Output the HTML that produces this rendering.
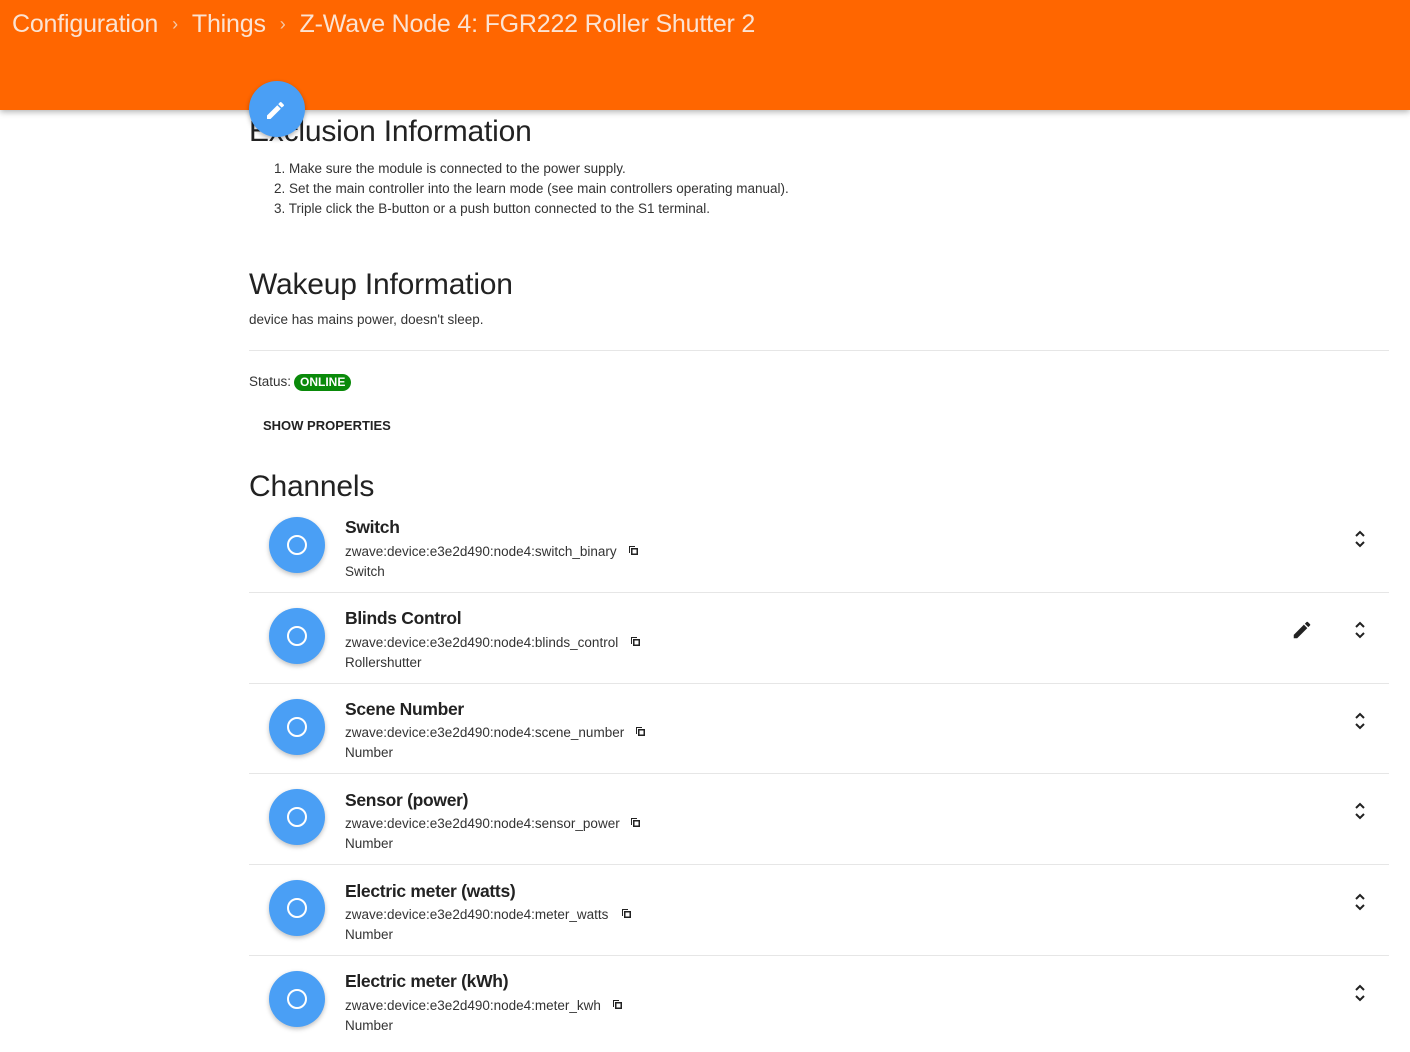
<!DOCTYPE html>
<html><head><meta charset="utf-8"><style>
*{margin:0;padding:0;box-sizing:border-box}
body{width:1410px;height:1052px;overflow:hidden;background:#fff;font-family:"Liberation Sans",sans-serif;color:#222;position:relative}
.hdr{position:absolute;left:0;top:0;width:1410px;height:110px;background:#ff6600;box-shadow:0 2px 6px rgba(0,0,0,.3);z-index:2}
.bc{position:absolute;left:12px;top:10px;color:#fbe3d3;font-size:25px;letter-spacing:-0.2px;white-space:nowrap}
.bc .s{display:inline-block;margin:0 14px;font-size:18px;color:#f3c9a8;position:relative;top:-2px}
.fab{position:absolute;left:249px;top:81px;width:56px;height:56px;border-radius:50%;background:#4a9ff5;z-index:3;box-shadow:0 2px 5px rgba(0,0,0,.3)}
.a{position:absolute;white-space:nowrap}
h2{font-weight:300;font-size:30px;color:#222;letter-spacing:-0.2px}
.sm{font-size:13.5px;color:#333;letter-spacing:0}
.hr{position:absolute;left:249px;width:1140px;height:1px;background:#e6e6e6}
.circ{position:absolute;left:269px;width:56px;height:56px;border-radius:50%;background:#4a9ff5;box-shadow:0 2px 5px rgba(0,0,0,.25)}
.circ:after{content:"";position:absolute;left:18px;top:18px;width:20px;height:20px;border:2px solid #fff;border-radius:50%;box-sizing:border-box}
.t{font-size:17.5px;font-weight:bold;color:#222;letter-spacing:-0.3px}
.chev{position:absolute;left:1353px}
</style></head><body>
<div class="hdr"><div class="bc">Configuration<span class="s">›</span>Things<span class="s">›</span>Z-Wave Node 4: FGR222 Roller Shutter 2</div></div>
<div class="fab"><svg width="56" height="56" viewBox="0 0 56 56"><path d="M18 34.5V38h3.5l10.3-10.3-3.5-3.5L18 34.5zm16.7-9.5c.4-.4.4-1 0-1.4l-2.3-2.3c-.4-.4-1-.4-1.4 0l-1.8 1.8 3.5 3.5 2-1.6z" fill="#fff"/></svg></div>

<div class="a" style="left:249px;top:115px"><h2>Exclusion Information</h2></div>
<div class="a sm" style="left:274px;top:159px;line-height:20px">1. Make sure the module is connected to the power supply.<br>2. Set the main controller into the learn mode (see main controllers operating manual).<br>3. Triple click the B-button or a push button connected to the S1 terminal.</div>

<div class="a" style="left:249px;top:268px"><h2>Wakeup Information</h2></div>
<div class="a sm" style="left:249px;top:312px">device has mains power, doesn't sleep.</div>
<div class="hr" style="top:350px"></div>

<div class="a sm" style="left:249px;top:374px">Status:</div>
<div class="a" style="left:294px;top:374px;height:17px;padding:0 6px;border-radius:9px;background:#0a8a0a;color:#fff;font-size:12px;font-weight:bold;line-height:17px">ONLINE</div>
<div class="a" style="left:263px;top:418px;font-size:13px;font-weight:bold;color:#222">SHOW PROPERTIES</div>

<div class="a" style="left:249px;top:470px"><h2>Channels</h2></div>

<div class="circ" style="top:517px"></div>
<div class="a t" style="left:345px;top:517px">Switch</div>
<div class="a sm" style="left:345px;top:544px">zwave:device:e3e2d490:node4:switch_binary</div>
<div class="a sm" style="left:345px;top:564px">Switch</div>
<div class="hr" style="top:592px"></div>

<div class="circ" style="top:608px"></div>
<div class="a t" style="left:345px;top:608px">Blinds Control</div>
<div class="a sm" style="left:345px;top:635px">zwave:device:e3e2d490:node4:blinds_control</div>
<div class="a sm" style="left:345px;top:655px">Rollershutter</div>
<div class="hr" style="top:683px"></div>

<div class="circ" style="top:699px"></div>
<div class="a t" style="left:345px;top:699px">Scene Number</div>
<div class="a sm" style="left:345px;top:725px">zwave:device:e3e2d490:node4:scene_number</div>
<div class="a sm" style="left:345px;top:745px">Number</div>
<div class="hr" style="top:773px"></div>

<div class="circ" style="top:789px"></div>
<div class="a t" style="left:345px;top:790px">Sensor (power)</div>
<div class="a sm" style="left:345px;top:816px">zwave:device:e3e2d490:node4:sensor_power</div>
<div class="a sm" style="left:345px;top:836px">Number</div>
<div class="hr" style="top:864px"></div>

<div class="circ" style="top:880px"></div>
<div class="a t" style="left:345px;top:881px">Electric meter (watts)</div>
<div class="a sm" style="left:345px;top:907px">zwave:device:e3e2d490:node4:meter_watts</div>
<div class="a sm" style="left:345px;top:927px">Number</div>
<div class="hr" style="top:955px"></div>

<div class="circ" style="top:971px"></div>
<div class="a t" style="left:345px;top:971px">Electric meter (kWh)</div>
<div class="a sm" style="left:345px;top:998px">zwave:device:e3e2d490:node4:meter_kwh</div>
<div class="a sm" style="left:345px;top:1018px">Number</div>

<svg class="a" style="left:628px;top:545px" width="11" height="11" viewBox="0 0 11 11"><path d="M1 1h6v1H2v6H1z M3 3h7v7H3z M4.5 4.5v4h4v-4z" fill="#222" fill-rule="evenodd"/></svg>
<svg class="a" style="left:630px;top:636px" width="11" height="11" viewBox="0 0 11 11"><path d="M1 1h6v1H2v6H1z M3 3h7v7H3z M4.5 4.5v4h4v-4z" fill="#222" fill-rule="evenodd"/></svg>
<svg class="a" style="left:635px;top:726px" width="11" height="11" viewBox="0 0 11 11"><path d="M1 1h6v1H2v6H1z M3 3h7v7H3z M4.5 4.5v4h4v-4z" fill="#222" fill-rule="evenodd"/></svg>
<svg class="a" style="left:630px;top:817px" width="11" height="11" viewBox="0 0 11 11"><path d="M1 1h6v1H2v6H1z M3 3h7v7H3z M4.5 4.5v4h4v-4z" fill="#222" fill-rule="evenodd"/></svg>
<svg class="a" style="left:621px;top:908px" width="11" height="11" viewBox="0 0 11 11"><path d="M1 1h6v1H2v6H1z M3 3h7v7H3z M4.5 4.5v4h4v-4z" fill="#222" fill-rule="evenodd"/></svg>
<svg class="a" style="left:612px;top:999px" width="11" height="11" viewBox="0 0 11 11"><path d="M1 1h6v1H2v6H1z M3 3h7v7H3z M4.5 4.5v4h4v-4z" fill="#222" fill-rule="evenodd"/></svg>

<svg class="a" style="left:1291px;top:619px" width="22" height="22" viewBox="0 0 24 24"><path d="M3 17.25V21h3.75L17.81 9.94l-3.75-3.75L3 17.25zM20.71 7.040a1 1 0 000-1.41l-2.34-2.34a1 1 0 00-1.41 0l-1.830 1.83 3.75 3.75 1.83-1.83z" fill="#222"/></svg>

<svg class="chev" style="top:529px" width="14" height="20" viewBox="0 0 14 20"><path d="M3 7l4-4 4 4M3 13l4 4 4-4" stroke="#222" stroke-width="2" fill="none"/></svg>
<svg class="chev" style="top:620px" width="14" height="20" viewBox="0 0 14 20"><path d="M3 7l4-4 4 4M3 13l4 4 4-4" stroke="#222" stroke-width="2" fill="none"/></svg>
<svg class="chev" style="top:711px" width="14" height="20" viewBox="0 0 14 20"><path d="M3 7l4-4 4 4M3 13l4 4 4-4" stroke="#222" stroke-width="2" fill="none"/></svg>
<svg class="chev" style="top:801px" width="14" height="20" viewBox="0 0 14 20"><path d="M3 7l4-4 4 4M3 13l4 4 4-4" stroke="#222" stroke-width="2" fill="none"/></svg>
<svg class="chev" style="top:892px" width="14" height="20" viewBox="0 0 14 20"><path d="M3 7l4-4 4 4M3 13l4 4 4-4" stroke="#222" stroke-width="2" fill="none"/></svg>
<svg class="chev" style="top:983px" width="14" height="20" viewBox="0 0 14 20"><path d="M3 7l4-4 4 4M3 13l4 4 4-4" stroke="#222" stroke-width="2" fill="none"/></svg>
</body></html>
